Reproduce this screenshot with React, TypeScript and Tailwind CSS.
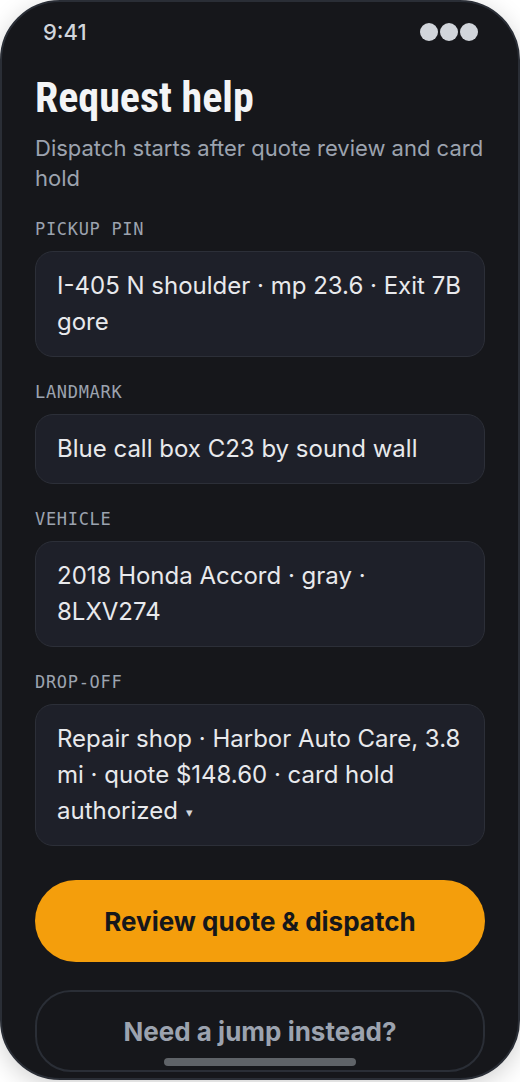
import React from "react";

const fields: { label: string; value: React.ReactNode }[] = [
  { label: "PICKUP PIN", value: "I-405 N shoulder · mp 23.6 · Exit 7B gore" },
  { label: "LANDMARK", value: "Blue call box C23 by sound wall" },
  { label: "VEHICLE", value: "2018 Honda Accord · gray · 8LXV274" },
  {
    label: "DROP-OFF",
    value: (
      <>
        Repair shop · Harbor Auto Care, 3.8 mi · quote $148.60 · card hold authorized
        <span className="inline-block ml-[8px] text-[13px] leading-none align-middle text-[#d1d5db]">▾</span>
      </>
    ),
  },
];

export default function App() {
  return (
    <div className="w-[520px] h-[1082px] bg-white overflow-hidden">
      <div className="relative w-[520px] h-[1080px] rounded-[60px] border-2 border-[#2a2e36] bg-[#16171b] overflow-hidden shadow-[0_6px_24px_rgba(0,0,0,0.18)] font-['Inter','Noto_Sans',sans-serif]">
        <div className="flex items-center justify-between pl-[41px] pr-[40px] pt-[18px]">
          <span className="text-[22px] leading-[24px] font-medium text-[#d1d5db]">9:41</span>
          <div className="flex gap-[2px]">
            <span className="w-[18px] h-[18px] rounded-full bg-[#d1d5db]" />
            <span className="w-[18px] h-[18px] rounded-full bg-[#d1d5db]" />
            <span className="w-[18px] h-[18px] rounded-full bg-[#d1d5db]" />
          </div>
        </div>
        <div className="px-[33px]">
          <h1 className="mt-[30px] text-[42px] leading-[48px] font-bold text-[#f3f4f6] font-['Roboto',sans-serif] [font-stretch:75%]">
            Request help
          </h1>
          <p className="mt-[11px] text-[22px] leading-[30px] text-[#9ca3af]">
            Dispatch starts after quote review and card hold
          </p>
          <div className="mt-[26px] flex flex-col gap-[25px]">
            {fields.map((f) => (
              <div key={f.label}>
                <div className="mb-[12px] text-[17px] leading-[20px] tracking-[0.04em] text-[#9ca3af] font-['DejaVu_Sans_Mono',monospace]">
                  {f.label}
                </div>
                <div className="rounded-[18px] border border-[#2c2f38] bg-[#1e2029] px-[21px] py-[16px] text-[24px] leading-[36px] text-[#e8e9ec]">
                  {f.value}
                </div>
              </div>
            ))}
          </div>
          <button className="mt-[34px] w-full h-[82px] rounded-full bg-[#f49e0c] text-[26px] font-bold text-[#16171b]">
            Review quote &amp; dispatch
          </button>
          <button className="mt-[28px] w-full h-[82px] rounded-[36px] border-2 border-[#2a2e36] text-[26px] font-bold text-[#9ca3af]">
            Need a jump instead?
          </button>
        </div>
        <div className="absolute left-1/2 -translate-x-1/2 bottom-[12px] w-[192px] h-[8px] rounded-full bg-[#5f6368]" />
      </div>
    </div>
  );
}
